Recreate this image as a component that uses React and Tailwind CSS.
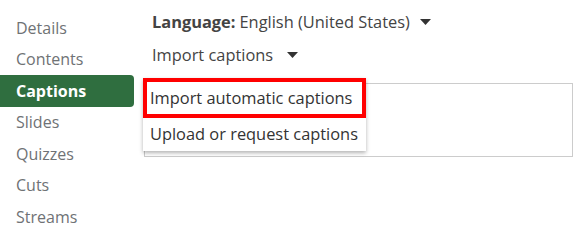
import React from "react";

const items = ["Details", "Contents", "Captions", "Slides", "Quizzes", "Cuts", "Streams"];

export default function App() {
  return (
    <div className="w-[576px] h-[240px] bg-white flex overflow-hidden" style={{ fontFamily: '"Open Sans", sans-serif' }}>
      <div className="w-[134px] shrink-0 pt-[12px] flex flex-col">
        {items.map((it) => (
          <div
            key={it}
            className={
              it === "Captions"
                ? "h-[31.5px] flex items-center pl-[16px] bg-[#2f6e3f] text-white font-bold rounded-r-[4px] text-[16px]"
                : "h-[31.5px] flex items-center pl-[16px] text-[#6f7275] text-[16px]"
            }
          >
            {it}
          </div>
        ))}
      </div>
      <div className="flex-1 flex flex-col pl-[18px] pt-[10px]">
        <div className="h-[24px] flex items-center text-[16.4px] text-[#444]">
          <span className="font-bold">Language:</span>
          <span className="ml-[4px]">English (United States)</span>
          <svg className="ml-[10px]" width="11" height="6" viewBox="0 0 11 6">
            <path d="M0 0H11L5.5 6Z" fill="#333" />
          </svg>
        </div>
        <div className="h-[24px] mt-[9px] flex items-center text-[16.4px] text-[#444]">
          <span>Import captions</span>
          <svg className="ml-[14px]" width="11" height="6" viewBox="0 0 11 6">
            <path d="M0 0H11L5.5 6Z" fill="#333" />
          </svg>
        </div>
        <div className="relative mt-[16px] ml-[-8px] w-[429px] h-[74px] border border-[#cccccc]">
          <div className="absolute left-[-2px] top-[-6px] w-[223px] bg-white shadow-[0_2px_4px_rgba(0,0,0,0.3)] flex flex-col text-[16.4px] text-[#333]">
            <div className="h-[40px] border-[4px] border-[#ff0000] flex items-center pl-[3px] whitespace-nowrap">Import automatic captions</div>
            <div className="h-[33px] flex items-center pl-[7px] whitespace-nowrap">Upload or request captions</div>
          </div>
        </div>
      </div>
    </div>
  );
}
